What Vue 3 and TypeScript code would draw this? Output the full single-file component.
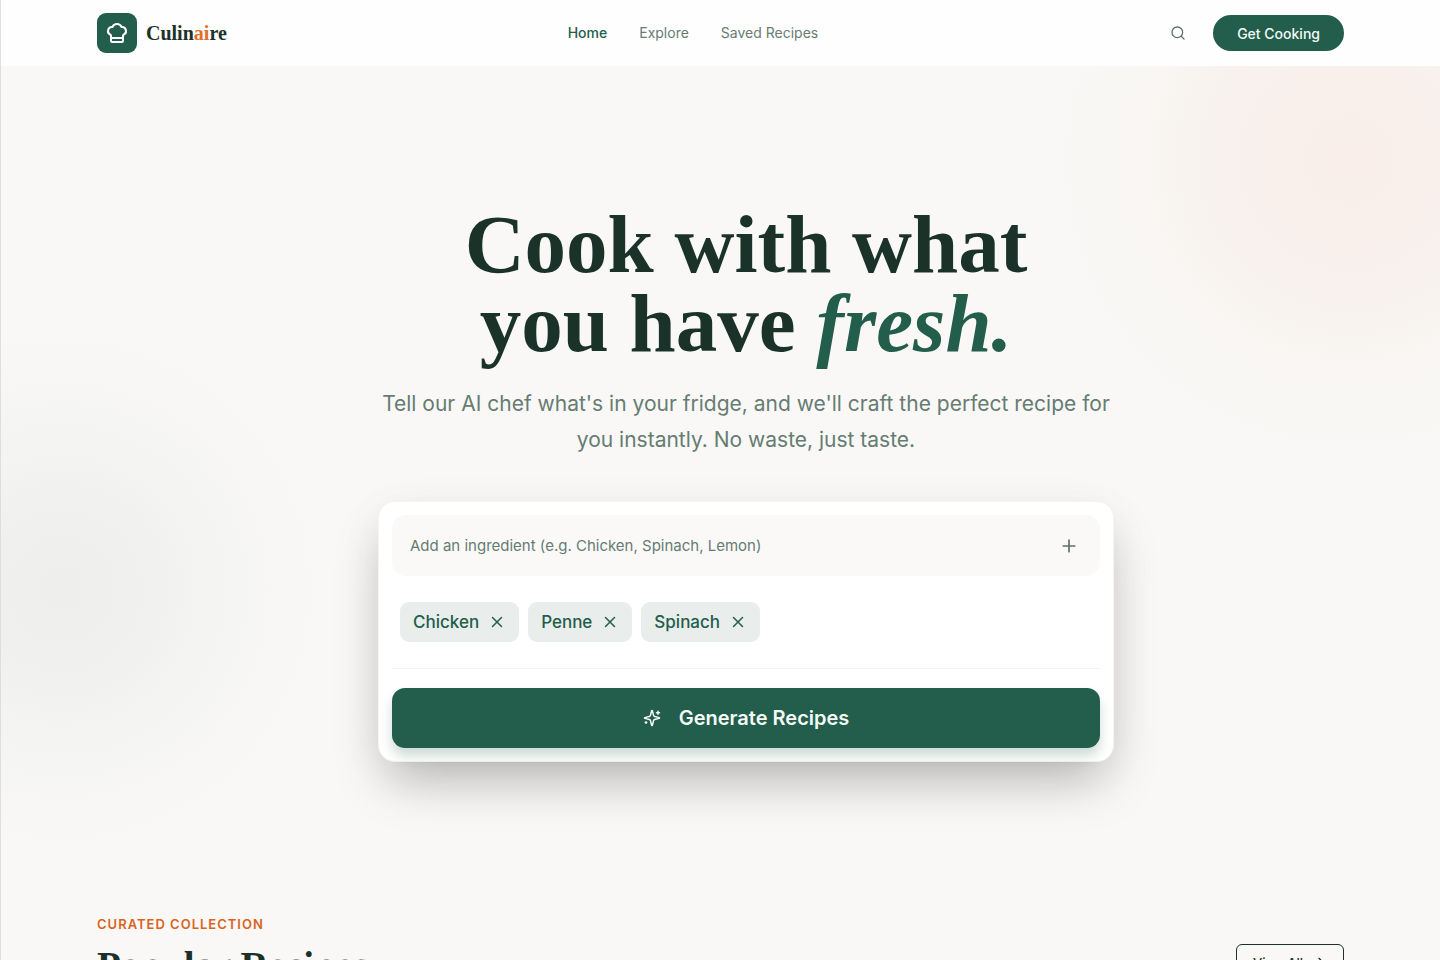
<script setup lang="ts">
import { ref } from 'vue'

interface NavLink {
  label: string
  href: string
  active: boolean
}

const links: NavLink[] = [
  { label: 'Home', href: '#home', active: true },
  { label: 'Explore', href: '#explore', active: false },
  { label: 'Saved Recipes', href: '#saved', active: false },
]

const draft = ref<string>('')
const ingredients = ref<string[]>(['Chicken', 'Penne', 'Spinach'])

function addIngredient(): void {
  const name = draft.value.trim()
  if (name && !ingredients.value.includes(name)) ingredients.value.push(name)
  draft.value = ''
}

function removeIngredient(name: string): void {
  ingredients.value = ingredients.value.filter((item) => item !== name)
}
</script>

<template>
  <div class="page">
    <header class="header">
      <a class="brand" href="#home">
        <span class="brand-mark">
          <svg class="icon icon-hat" viewBox="0 0 24 24" aria-hidden="true">
            <path d="M17 21a1 1 0 0 0 1-1v-5.350c0-.457.316-.844.727-1.041a4 4 0 0 0-2.134-7.589 5 5 0 0 0-9.186 0 4 4 0 0 0-2.134 7.588c.411.198.727.585.727 1.041V20a1 1 0 0 0 1 1Z" />
            <path d="M6 17h12" />
          </svg>
        </span>
        <span class="brand-name">Culin<span class="brand-accent">ai</span>re</span>
      </a>
      <nav class="nav" aria-label="Main">
        <a
          v-for="link in links"
          :key="link.label"
          class="nav-link"
          :class="{ active: link.active }"
          :href="link.href"
        >{{ link.label }}</a>
      </nav>
      <div class="actions">
        <button class="search" type="button" aria-label="Search">
          <svg class="icon icon-search" viewBox="0 0 24 24" aria-hidden="true">
            <circle cx="11" cy="11" r="8" />
            <path d="m21 21-4.300-4.300" />
          </svg>
        </button>
        <button class="cta" type="button">Get Cooking</button>
      </div>
    </header>

    <main>
      <section class="hero">
        <h1 class="title">Cook with what<br />you have <em>fresh.</em></h1>
        <p class="subtitle">
          Tell our AI chef what's in your fridge, and we'll craft the perfect recipe for<br />
          you instantly. No waste, just taste.
        </p>

        <form class="card" @submit.prevent="addIngredient">
          <div class="field">
            <input
              v-model="draft"
              class="field-input"
              type="text"
              aria-label="Add an ingredient"
              placeholder="Add an ingredient (e.g. Chicken, Spinach, Lemon)"
            />
            <button class="add" type="submit" aria-label="Add">
              <svg class="icon icon-plus" viewBox="0 0 24 24" aria-hidden="true">
                <path d="M5 12h14M12 5v14" />
              </svg>
            </button>
          </div>
          <ul class="chips">
            <li v-for="item in ingredients" :key="item" class="chip">
              {{ item }}
              <button
                class="chip-remove"
                type="button"
                :aria-label="`Remove ${item}`"
                @click="removeIngredient(item)"
              >
                <svg class="icon icon-x" viewBox="0 0 24 24" aria-hidden="true">
                  <path d="M18 6 6 18M6 6l12 12" />
                </svg>
              </button>
            </li>
          </ul>
          <button class="generate" type="button">
            <svg class="icon icon-sparkles" viewBox="0 0 24 24" aria-hidden="true">
              <path d="M9.937 15.500A2 2 0 0 0 8.500 14.063l-6.135-1.582a.5.5 0 0 1 0-.962L8.500 9.936A2 2 0 0 0 9.937 8.500l1.582-6.135a.5.5 0 0 1 .963 0L14.063 8.500A2 2 0 0 0 15.500 9.937l6.135 1.581a.5.5 0 0 1 0 .964L15.500 14.063a2 2 0 0 0-1.437 1.437l-1.582 6.135a.5.5 0 0 1-.963 0z" />
              <path d="M20 3v4M22 5h-4" />
              <path d="M4 17v2M5 18H3" />
            </svg>
            Generate Recipes
          </button>
        </form>
      </section>

      <section class="collection">
        <div>
          <p class="eyebrow">CURATED COLLECTION</p>
          <h2 class="collection-title">Popular Recipes</h2>
        </div>
        <button class="view-all" type="button">
          View All
          <svg class="icon icon-arrow" viewBox="0 0 24 24" aria-hidden="true">
            <path d="M5 12h14M12 5l7 7-7 7" />
          </svg>
        </button>
      </section>
    </main>
  </div>
</template>

<style>
body {
  margin: 0;
}
</style>

<style scoped>
.page {
  box-sizing: border-box;
  height: 100vh;
  overflow: hidden;
  border-left: 1px solid #dededd;
  background:
    radial-gradient(circle at calc(100% - 90px) 160px, #f9eeea 0, #f9efeb 80px, #f7f2ee 150px, rgba(249, 246, 243, 0.7) 220px, rgba(249, 248, 246, 0) 310px),
    radial-gradient(circle at 60px 590px, #eeefed 0, #f0f1ef 80px, #f4f4f2 150px, rgba(249, 248, 246, 0) 260px),
    #f9f8f6;
  color: #1a322a;
  font-family: Inter, 'Noto Sans', sans-serif;
}

button,
input {
  font-family: inherit;
}

button {
  padding: 0;
  border: 0;
  background: none;
  cursor: pointer;
}

.icon {
  display: block;
  flex: none;
  fill: none;
  stroke: currentColor;
  stroke-width: 2;
  stroke-linecap: round;
  stroke-linejoin: round;
}

.header {
  display: flex;
  align-items: center;
  justify-content: space-between;
  box-sizing: border-box;
  height: 66px;
  padding: 0 96px;
  background: #fefefe;
}

.brand {
  display: flex;
  align-items: center;
  gap: 9px;
  color: #1a322a;
  text-decoration: none;
}

.brand-mark {
  display: grid;
  place-items: center;
  width: 40px;
  height: 40px;
  border-radius: 9px;
  background: #235d4b;
  color: #fff;
}

.icon-hat {
  width: 24px;
  height: 24px;
}

.brand-name {
  font: bold 20px/28px 'Liberation Serif', serif;
}

.brand-accent {
  color: #e0702b;
}

.nav {
  display: flex;
  gap: 32px;
}

.nav-link {
  color: #667c73;
  font-size: 14px;
  line-height: 20px;
  text-decoration: none;
}

.nav-link.active {
  color: #235d4b;
  font-weight: 500;
}

.actions {
  display: flex;
  align-items: center;
  gap: 16px;
}

.search {
  display: grid;
  place-items: center;
  width: 38px;
  height: 38px;
  color: #5c7269;
}

.icon-search {
  width: 16px;
  height: 16px;
}

.cta {
  height: 36px;
  padding: 0 24px;
  border-radius: 18px;
  background: #235d4b;
  color: #f4faf7;
  font-size: 14px;
  font-weight: 500;
}

.hero {
  display: flex;
  flex-direction: column;
  align-items: center;
  padding: 139px 0 0 51px;
}

.title {
  margin: 0;
  font: bold 83px/79px 'Liberation Serif', serif;
  text-align: center;
}

.title em {
  color: #235d4b;
}

.subtitle {
  margin: 23px 0 43px;
  color: #667c73;
  font-size: 21px;
  line-height: 36px;
  text-align: center;
}

.card {
  box-sizing: border-box;
  width: 100%;
  max-width: 736px;
  padding: 13px;
  border: 1px solid #f3f4f3;
  border-radius: 17px;
  background: #fff;
  box-shadow: 0 26px 52px -10px rgba(0, 0, 0, 0.27), 0 8px 50px rgba(0, 0, 0, 0.04);
}

.field {
  display: flex;
  align-items: center;
  height: 61px;
  padding: 0 20px 0 18px;
  border-radius: 14px;
  background: #faf9f7;
}

.field-input {
  flex: 1;
  min-width: 0;
  padding: 0;
  border: 0;
  outline: 0;
  background: none;
  color: #1a322a;
  font-size: 15px;
  line-height: 24px;
}

.field-input::placeholder {
  color: #667c73;
  opacity: 1;
}

.add {
  display: grid;
  place-items: center;
  width: 22px;
  height: 22px;
  color: #5c7269;
}

.icon-plus {
  width: 20px;
  height: 20px;
}

.chips {
  display: flex;
  flex-wrap: wrap;
  gap: 9px;
  margin: 0 0 19px;
  padding: 26px 8px;
  border-bottom: 1px solid #f4f4f3;
  list-style: none;
}

.chip {
  display: flex;
  align-items: center;
  gap: 9px;
  height: 40px;
  padding: 0 13px;
  border-radius: 9px;
  background: #e9eeec;
  color: #235d4b;
  font-size: 17px;
  font-weight: 500;
}

.chip-remove {
  color: inherit;
}

.icon-x {
  width: 18px;
  height: 18px;
}

.generate {
  display: flex;
  align-items: center;
  justify-content: center;
  gap: 18px;
  width: 100%;
  height: 60px;
  border-radius: 13px;
  background: #235d4b;
  box-shadow: 0 8px 12px rgba(35, 93, 75, 0.22);
  color: #f4faf7;
  font-size: 20px;
  font-weight: 600;
}

.icon-sparkles {
  width: 18px;
  height: 18px;
}

.collection {
  display: flex;
  align-items: flex-end;
  justify-content: space-between;
  padding: 152px 96px 64px;
}

.eyebrow {
  margin: 0 0 10px;
  color: #d9641e;
  font-size: 13px;
  font-weight: 600;
  line-height: 20px;
  letter-spacing: 1px;
}

.collection-title {
  margin: 0;
  font: bold 39px/44px 'Liberation Serif', serif;
}

.view-all {
  display: flex;
  align-items: center;
  gap: 8px;
  height: 38px;
  margin-bottom: 6px;
  padding: 0 16px;
  border: 1px solid #1a322a;
  border-radius: 6px;
  color: #1a322a;
  font-size: 13px;
  font-weight: 500;
}

.icon-arrow {
  width: 16px;
  height: 16px;
}
</style>
